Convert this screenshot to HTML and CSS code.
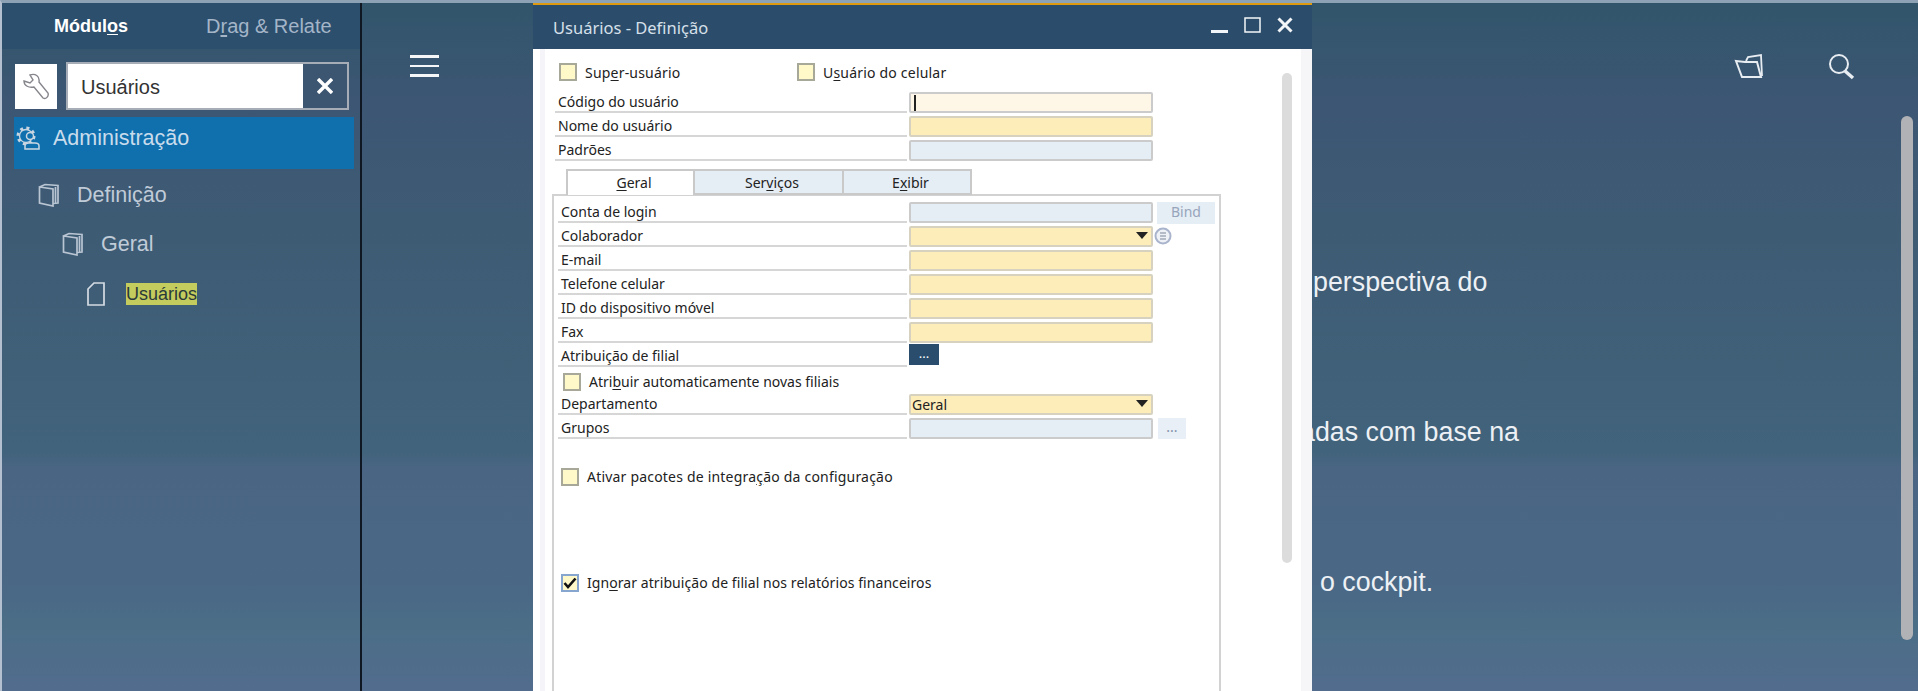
FILE: index.html
```html
<!DOCTYPE html>
<html lang="pt-BR">
<head>
  <meta charset="UTF-8" />
  <meta name="viewport" content="width=device-width, initial-scale=1.0"/>
  <title>Usuários - Definição</title>
  <link rel="stylesheet" href="styles.css">
</head>
<body>
  <aside class="sidebar">
    <div class="side-tabs">
      <span class="side-tab active">Módul<u>o</u>s</span>
      <span class="side-tab">D<u>r</u>ag &amp; Relate</span>
    </div>

    <div class="side-search">
      <div class="wrench-box">
        <svg width="26" height="28" viewBox="0 0 26 28" fill="none" stroke="#85858c" stroke-width="1.4">
          <path d="M1 8 L7 10 L10 7 L7 2 C12 0 17 3 16 9 L25 20 C26 23 23 27 20 25 L11 14 C6 15 1 13 1 8 Z"/>
        </svg>
      </div>
      <div class="search-box">
        <span class="search-text">Usuários</span>
        <span class="search-clear">
          <svg width="16" height="16" viewBox="0 0 16 16" stroke="#fff" stroke-width="3.4"><path d="M1 1 L15 15 M15 1 L1 15"/></svg>
        </span>
      </div>
    </div>

    <div class="module-row">
      <svg class="module-icon" width="24" height="24" viewBox="0 0 24 24" fill="none" stroke="#c9d6e2">
        <circle cx="10" cy="10" r="8" stroke-width="3" stroke-dasharray="3 3.3"/>
        <circle cx="10" cy="10" r="6.5" stroke-width="1.3"/>
        <circle cx="14" cy="10" r="3.5" fill="#1070ae" stroke-width="1.5"/>
        <path d="M9 23 v-3 c0 -2 2 -3 4 -3 h6 c2 0 4 1 4 3 v3 Z" fill="#1070ae" stroke-width="1.5"/>
      </svg>
      <span>Administração</span>
    </div>

    <div class="tree-row level-1">
      <svg width="22" height="24" viewBox="0 0 22 24" fill="none" stroke="#b9c5d2" stroke-width="1.7">
        <path d="M1.5 4 L15 6 V23 L1.5 20 Z M1.5 4 L7 1.5 L20 2.5 V20 L15 20.5 M17.5 4 V20"/>
      </svg>
      <span>Definição</span>
    </div>
    <div class="tree-row level-2">
      <svg width="22" height="24" viewBox="0 0 22 24" fill="none" stroke="#b9c5d2" stroke-width="1.7">
        <path d="M1.5 4 L15 6 V23 L1.5 20 Z M1.5 4 L7 1.5 L20 2.5 V20 L15 20.5 M17.5 4 V20"/>
      </svg>
      <span>Geral</span>
    </div>
    <div class="tree-row level-3">
      <svg width="18" height="24" viewBox="0 0 18 24" fill="none" stroke="#d5dce4" stroke-width="1.7">
        <path d="M7 1 H17 V23 H1 V7 Z"/>
      </svg>
      <span class="hit">Usuários</span>
    </div>
  </aside>

  <main class="desktop">
    <div class="topbar">
      <div class="burger"><i></i><i></i><i></i></div>
      <div class="top-icons">
        <svg width="30" height="26" viewBox="0 0 30 26" fill="none" stroke="#e8edf2" stroke-width="2">
          <path d="M2 8 L11 9 H23 L27 24 H8 Z"/>
          <path d="M12 8 L14 4 L27 2 L28 23" stroke-width="1.8"/>
        </svg>
        <svg width="28" height="27" viewBox="0 0 28 27" fill="none" stroke="#e8edf2">
          <circle cx="11" cy="11" r="9" stroke-width="2"/>
          <path d="M17 18 L25 25" stroke-width="3.4"/>
        </svg>
      </div>
    </div>

    <div class="backdrop-text">
      <p>perspectiva do</p>
      <p class="cut">adas com base na</p>
      <p class="indent">o cockpit.</p>
    </div>

    <div class="page-scroll"></div>

    <section class="window">
      <header class="window-title">
        <span>Usuários - Definição</span>
        <div class="window-btns">
          <svg width="18" height="16" viewBox="0 0 18 16" fill="#f3f6f9"><rect x="0" y="13" width="17" height="3"/></svg>
          <svg width="18" height="16" viewBox="0 0 18 16" fill="none" stroke="#f3f6f9" stroke-width="1.5"><rect x="1" y="1" width="15" height="14"/></svg>
          <svg width="16" height="16" viewBox="0 0 16 16" stroke="#f3f6f9" stroke-width="3"><path d="M1.5 1.5 L14.5 14.5 M14.5 1.5 L1.5 14.5"/></svg>
        </div>
      </header>

      <div class="window-body">
        <div class="form">
          <div class="scroll-thumb"></div>

          <div class="top-checks">
            <label class="check"><span class="box"></span><span>Sup<u>e</u>r-usuário</span></label>
            <label class="check"><span class="box"></span><span>U<u>s</u>uário do celular</span></label>
          </div>

          <div class="row"><span class="lbl">Código do usuário</span><div class="fld focus"><i class="caret"></i></div></div>
          <div class="row"><span class="lbl">Nome do usuário</span><div class="fld req"></div></div>
          <div class="row"><span class="lbl">Padrões</span><div class="fld ro"></div></div>

          <div class="tabs">
            <span class="tab active"><u>G</u>eral</span>
            <span class="tab">Ser<u>v</u>iços</span>
            <span class="tab">E<u>x</u>ibir</span>
          </div>

          <div class="panel">
            <div class="row"><span class="lbl">Conta de login</span><div class="fld ro"></div><span class="bind">Bind</span></div>
            <div class="row">
              <span class="lbl">Colaborador</span>
              <div class="fld req"><i class="arrow"></i></div>
              <svg class="list-btn" width="18" height="18" viewBox="0 0 18 18" fill="none" stroke="#a9b4cc">
                <circle cx="9" cy="9" r="7.5" fill="#eef1f6" stroke-width="2"/>
                <path d="M6 6 H12 M6 9 H12 M6 12 H12" stroke="#7e8798" stroke-width="1.2"/>
              </svg>
            </div>
            <div class="row"><span class="lbl">E-mail</span><div class="fld req"></div></div>
            <div class="row"><span class="lbl">Telefone celular</span><div class="fld req"></div></div>
            <div class="row"><span class="lbl">ID do dispositivo móvel</span><div class="fld req"></div></div>
            <div class="row"><span class="lbl">Fax</span><div class="fld req"></div></div>
            <div class="row"><span class="lbl">Atribuição de filial</span><button class="dots-btn">...</button></div>
            <div class="row check-row"><label class="check"><span class="box"></span><span>Atri<u>b</u>uir automaticamente novas filiais</span></label></div>
            <div class="row"><span class="lbl">Departamento</span><div class="fld req">Geral<i class="arrow"></i></div></div>
            <div class="row"><span class="lbl">Grupos</span><div class="fld ro"></div><span class="dots-light">...</span></div>

            <label class="check integration"><span class="box"></span><span>Ativar pacotes de integra<u>ç</u>ão da configuração</span></label>
            <label class="check ignore"><span class="box on"><svg width="14" height="12" viewBox="0 0 14 12" fill="none" stroke="#111" stroke-width="2.6"><path d="M1.5 6 L5 10 L12.5 1.5"/></svg></span><span>Ign<u>o</u>rar atribuição de filial nos relatórios financeiros</span></label>
          </div>
        </div>
      </div>
    </section>
  </main>
</body>
</html>
```

FILE: styles.css
```css
* { box-sizing: border-box; }
html, body { height: 100%; }
body {
  margin: 0;
  height: 691px;
  overflow: hidden;
  display: flex;
  border-top: 3px solid #8ea2b6;
  border-left: 2px solid #b4c0cf;
  font-family: "Liberation Sans", Arial, sans-serif;
  color: #fff;
  background: linear-gradient(180deg, #31556b 0, #3c5673 100px, #3e5b74 230px, #41637b 450px, #4a6584 470px, #4a6986 600px, #4b6e86 625px, #526c8e 691px);
}
u { text-underline-offset: 2px; }

/* left panel */
.sidebar { width: 360px; flex: none; border-right: 2px solid #0f1822; }
.side-tabs { height: 46px; display: flex; align-items: center; background: #2c4f6e; font-size: 20px; padding-left: 52px; gap: 78px; color: #a4b5c8; }
.side-tab.active { color: #fff; font-weight: 700; font-size: 18px; }
.side-search { display: flex; gap: 9px; padding: 15px 0 0 13px; height: 68px; }
.wrench-box { width: 42px; height: 45px; background: #fff; display: flex; align-items: center; justify-content: center; }
.search-box { width: 283px; height: 48px; margin-top: -2px; display: flex; border: 2px solid #a6adb6; }
.search-text { flex: 1; background: #fff; color: #333; font-size: 20px; padding: 0 13px; line-height: 46px; }
.search-clear { width: 44px; background: #3c5672; display: flex; align-items: center; justify-content: center; }
.module-row { margin-left: 12px; width: 340px; height: 52px; background: #1070ae; color: #c9dcec; font-size: 21.5px; display: flex; gap: 13px; padding: 9px 0 0 2px; }
.tree-row { display: flex; align-items: center; height: 50px; font-size: 21.5px; color: #c0cbd8; gap: 17px; }
.level-1 { padding-left: 36px; padding-top: 2px; }
.level-2 { padding-left: 60px; }
.level-3 { padding-left: 85px; gap: 21px; font-size: 18px; }
.hit { background: #c4cc5e; color: #2a3a3a; padding: 1px 0; line-height: 20px; }

/* desktop area */
.desktop { flex: 1; position: relative; }
.topbar { display: flex; justify-content: space-between; padding: 52px 0 0 48px; height: 100px; }
.burger { width: 29px; display: flex; flex-direction: column; gap: 7px; height: 22px; }
.burger i { display: block; height: 2.6px; background: #f4f6f8; }
.top-icons { display: flex; gap: 64px; align-items: center; height: 28px; padding-right: 62px; margin-top: -3px; }
.backdrop-text { position: relative; padding-left: 951px; margin-top: 164px; font-size: 26.8px; color: #edf1f5; }
.backdrop-text p { margin: 0 0 120px; line-height: 30px; white-space: nowrap; }
.backdrop-text .cut { margin-left: -13px; }
.backdrop-text .indent { margin-left: 7px; }
.page-scroll { position: absolute; top: 113px; right: 5px; width: 12px; height: 524px; border-radius: 6px; background: #b1b2b6; }

/* dialog, sits over the desktop */
.window { position: absolute; left: 171px; top: -1px; width: 779px; height: 689px; display: flex; flex-direction: column; border-top: 3px solid #e09a10; color: #222; font-family: "Noto Sans", sans-serif; }
.window-title { height: 44px; flex: none; background: #2c4c6b; color: #d6e0ea; display: flex; align-items: center; justify-content: space-between; padding: 0 19px 0 20px; font-size: 16.5px; }
.window-btns { display: flex; align-items: center; gap: 15px; margin-top: -4px; }
.window-body { flex: 1; background: #fff; padding-left: 7px; border-right: 11px solid #f6f6f9; min-height: 0; }
.form { height: 100%; position: relative; border-left: 5px solid #f5f5f9; padding: 14px 0 0 10px; font-size: 14px; }
.scroll-thumb { position: absolute; left: 737px; top: 24px; width: 10px; height: 490px; border-radius: 5px; background: #dcdcdc; }

.check { display: flex; align-items: center; gap: 8px; white-space: nowrap; letter-spacing: 0.2px; }
.box { width: 18px; height: 18px; flex: none; background: #fff9c9; border: 2px solid #a8a898; display: flex; align-items: center; justify-content: center; }
.box.on { border-color: #86a6cf; }
.top-checks { display: flex; height: 29px; padding-left: 4px; }
.top-checks .check { width: 238px; height: 18px; }

.row { display: flex; height: 24px; gap: 2px; }
.lbl { width: 352px; height: 21px; flex: none; border-bottom: 2px solid #d6d6d6; padding-left: 3px; line-height: 20px; white-space: nowrap; }
.fld { width: 244px; height: 21px; flex: none; position: relative; border: 2px solid #cbcbcb; border-radius: 2px; line-height: 17px; padding-left: 1px; }
.fld.req { background: #fdedb9; border-color: #d6d2bf; }
.fld.ro { background: #e5edf5; }
.fld.focus { background: #fef6e6; }
.caret { position: absolute; left: 3px; top: 1px; width: 2px; height: 16px; background: #222; }
.arrow { position: absolute; right: 3px; top: 4px; border: 6px solid transparent; border-top: 7px solid #222; border-bottom: 0; }

.tabs { display: flex; margin: 5px 0 -1px 11px; height: 26px; position: relative; }
.tab { width: 149px; height: 26px; padding-left: 7px; text-align: center; line-height: 23px; background: #e5edf5; border: 2px solid #c9c9c9; border-left-width: 0; }
.tab.active { width: 129px; background: #fff; border-left-width: 2px; border-bottom: 0; }
.tab:last-child { width: 128px; }
.panel { margin-left: -3px; width: 669px; height: 498px; background: #fff; border: 2px solid #d2d2d2; border-bottom: 0; padding: 6px 0 0 4px; }
.panel .lbl { width: 349px; }
.bind { width: 58px; height: 22px; margin-left: 2px; background: #e5edf5; color: #97a5bb; text-align: center; line-height: 20px; }
.list-btn { margin: 1px 0 0 -1px; }
.dots-btn { width: 30px; height: 21px; margin: -2px 0 0 0; padding: 0 0 6px; border: 0; background: #2a4d6e; color: #fff; font: 13px "Noto Sans", sans-serif; }
.dots-light { width: 28px; height: 21px; margin-left: 3px; background: #e8eff6; color: #8592ac; text-align: center; line-height: 18px; }
.check-row { padding-left: 5px; margin-top: -1px; height: 25px; }
.check-row .check { letter-spacing: 0; }
.integration { margin: 25px 0 0 3px; }
.ignore { margin: 87px 0 0 3px; letter-spacing: 0.07px; }
```
